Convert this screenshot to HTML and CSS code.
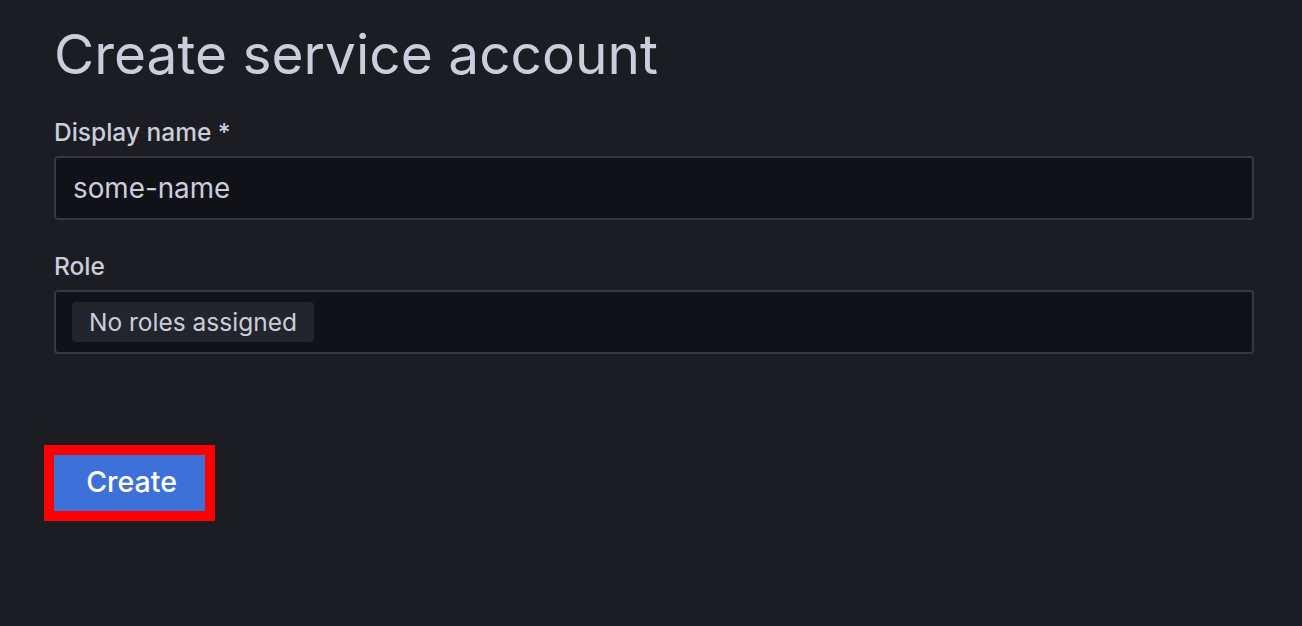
FILE: index.html
```html
<!DOCTYPE html>
<html>
<head>
<meta charset="utf-8">
<link rel="stylesheet" href="styles.css">
</head>
<body>
<div class="page">
  <h1 class="title">Create service account</h1>
  <div class="field">
    <label class="label">Display name *</label>
    <div class="input"><span class="value">some-name</span></div>
  </div>
  <div class="field">
    <label class="label">Role</label>
    <div class="input role"><span class="chip">No roles assigned</span></div>
  </div>
  <div class="actions">
    <div class="highlight"><button class="btn">Create</button></div>
  </div>
</div>
</body>
</html>
```
FILE: styles.css
```css
html, body {
  margin: 0;
  padding: 0;
  background: #1b1d22;
  height: 100%;
}
body {
  font-family: Inter, "Noto Sans", sans-serif;
  color: #ccccdc;
}
.page {
  padding: 14px 48px 0 54px;
  display: flex;
  flex-direction: column;
}
.title {
  margin: 0 0 24px 0;
  font-size: 55px;
  font-weight: 400;
  line-height: 80px;
  color: #ccccdc;
}
.field {
  display: flex;
  flex-direction: column;
  margin-bottom: 32px;
}
.label {
  font-size: 24.5px;
  font-weight: 500;
  line-height: 28px;
  margin-bottom: 10px;
}
.input {
  box-sizing: border-box;
  height: 64px;
  border: 2px solid #37383e;
  border-radius: 4px;
  background: #111217;
  display: flex;
  align-items: center;
  padding: 0 17px;
}
.value {
  font-size: 27.8px;
  color: #ccccdc;
}
.role {
  padding: 0 16px;
}
.chip {
  background: #22252b;
  border-radius: 4px;
  height: 40px;
  display: flex;
  align-items: center;
  padding: 0 17px;
  font-size: 24.5px;
  color: #ccccdc;
}
.actions {
  margin-top: 59px;
  display: flex;
}
.highlight {
  margin-left: -10px;
  border: 10px solid #ff0000;
  display: flex;
}
.btn {
  height: 56px;
  width: 151px;
  border: none;
  background: #3d71d9;
  color: #ffffff;
  font-family: Inter, "Noto Sans", sans-serif;
  font-size: 28.5px;
  font-weight: 500;
  padding: 0 0 3px 4px;
}
```
